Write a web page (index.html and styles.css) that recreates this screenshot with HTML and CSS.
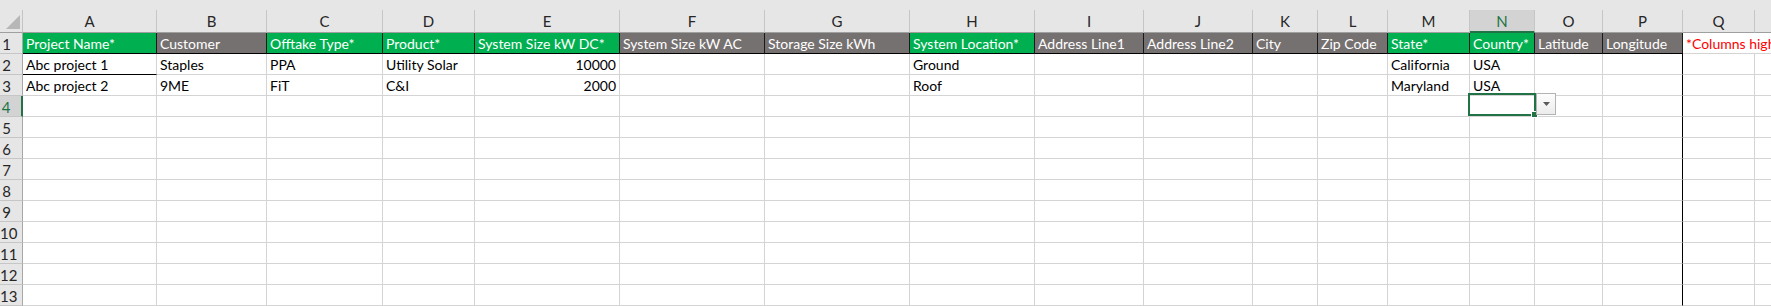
FILE: index.html
```html
<!DOCTYPE html>
<html lang="en">
<head>
<meta charset="utf-8">
<title>Projects sheet</title>
<link rel="stylesheet" href="styles.css">
</head>
<body>
<div class="topstrip"></div>
<div class="sheet">
  <div class="row colheads">
    <div class="corner"><svg class="tri" width="14" height="14" viewBox="0 0 14 14"><polygon points="14,0 14,14 0,14" fill="#b7b7b7"/></svg></div>
    <div class="ch">A</div><div class="ch">B</div><div class="ch">C</div><div class="ch">D</div><div class="ch">E</div><div class="ch">F</div><div class="ch">G</div><div class="ch">H</div><div class="ch">I</div><div class="ch">J</div><div class="ch">K</div><div class="ch">L</div><div class="ch">M</div><div class="ch ch-sel">N</div><div class="ch">O</div><div class="ch">P</div><div class="ch">Q</div><div class="ch"></div>
  </div>

  <div class="row">
    <div class="rh">1</div>
    <div class="c hd green">Project Name*</div>
    <div class="c hd grey">Customer</div>
    <div class="c hd green">Offtake Type*</div>
    <div class="c hd green">Product*</div>
    <div class="c hd green">System Size kW DC*</div>
    <div class="c hd grey">System Size kW AC</div>
    <div class="c hd grey">Storage Size kWh</div>
    <div class="c hd green">System Location*</div>
    <div class="c hd grey">Address Line1</div>
    <div class="c hd grey">Address Line2</div>
    <div class="c hd grey">City</div>
    <div class="c hd grey">Zip Code</div>
    <div class="c hd green">State*</div>
    <div class="c hd green">Country*</div>
    <div class="c hd grey">Latitude</div>
    <div class="c hd grey">Longitude</div>
    <div class="c note">*Columns highlighted in green are mandatory</div>
    <div class="c last"></div>
  </div>

  <div class="row">
    <div class="rh">2</div>
    <div class="c under">Abc project 1</div>
    <div class="c">Staples</div>
    <div class="c">PPA</div>
    <div class="c">Utility Solar</div>
    <div class="c num">10000</div>
    <div class="c"></div><div class="c"></div>
    <div class="c">Ground</div>
    <div class="c"></div><div class="c"></div><div class="c"></div><div class="c"></div>
    <div class="c">California</div>
    <div class="c">USA</div>
    <div class="c"></div>
    <div class="c edge"></div>
    <div class="c"></div>
    <div class="c"></div>
  </div>

  <div class="row">
    <div class="rh">3</div>
    <div class="c">Abc project 2</div>
    <div class="c">9ME</div>
    <div class="c">FiT</div>
    <div class="c">C&amp;I</div>
    <div class="c num">2000</div>
    <div class="c"></div><div class="c"></div>
    <div class="c">Roof</div>
    <div class="c"></div><div class="c"></div><div class="c"></div><div class="c"></div>
    <div class="c">Maryland</div>
    <div class="c">USA</div>
    <div class="c"></div>
    <div class="c edge"></div>
    <div class="c"></div>
    <div class="c"></div>
  </div>

  <div class="row">
    <div class="rh rh-sel">4</div>
    <div class="c"></div><div class="c"></div><div class="c"></div><div class="c"></div><div class="c"></div><div class="c"></div><div class="c"></div><div class="c"></div><div class="c"></div><div class="c"></div><div class="c"></div><div class="c"></div><div class="c"></div>
    <div class="c active">
      <span class="selbox"><span class="handle"></span></span>
      <span class="dropbtn"><svg width="7" height="4" viewBox="0 0 7 4"><polygon points="0,0 7,0 3.5,4" fill="#5a5a5a"/></svg></span>
    </div>
    <div class="c"></div>
    <div class="c edge"></div>
    <div class="c"></div>
    <div class="c"></div>
  </div>

  <div class="row">
    <div class="rh">5</div>
    <div class="c"></div><div class="c"></div><div class="c"></div><div class="c"></div><div class="c"></div><div class="c"></div><div class="c"></div><div class="c"></div><div class="c"></div><div class="c"></div><div class="c"></div><div class="c"></div><div class="c"></div><div class="c"></div><div class="c"></div>
    <div class="c edge"></div><div class="c"></div><div class="c"></div>
  </div>
  <div class="row">
    <div class="rh">6</div>
    <div class="c"></div><div class="c"></div><div class="c"></div><div class="c"></div><div class="c"></div><div class="c"></div><div class="c"></div><div class="c"></div><div class="c"></div><div class="c"></div><div class="c"></div><div class="c"></div><div class="c"></div><div class="c"></div><div class="c"></div>
    <div class="c edge"></div><div class="c"></div><div class="c"></div>
  </div>
  <div class="row">
    <div class="rh">7</div>
    <div class="c"></div><div class="c"></div><div class="c"></div><div class="c"></div><div class="c"></div><div class="c"></div><div class="c"></div><div class="c"></div><div class="c"></div><div class="c"></div><div class="c"></div><div class="c"></div><div class="c"></div><div class="c"></div><div class="c"></div>
    <div class="c edge"></div><div class="c"></div><div class="c"></div>
  </div>
  <div class="row">
    <div class="rh">8</div>
    <div class="c"></div><div class="c"></div><div class="c"></div><div class="c"></div><div class="c"></div><div class="c"></div><div class="c"></div><div class="c"></div><div class="c"></div><div class="c"></div><div class="c"></div><div class="c"></div><div class="c"></div><div class="c"></div><div class="c"></div>
    <div class="c edge"></div><div class="c"></div><div class="c"></div>
  </div>
  <div class="row">
    <div class="rh">9</div>
    <div class="c"></div><div class="c"></div><div class="c"></div><div class="c"></div><div class="c"></div><div class="c"></div><div class="c"></div><div class="c"></div><div class="c"></div><div class="c"></div><div class="c"></div><div class="c"></div><div class="c"></div><div class="c"></div><div class="c"></div>
    <div class="c edge"></div><div class="c"></div><div class="c"></div>
  </div>
  <div class="row">
    <div class="rh">10</div>
    <div class="c"></div><div class="c"></div><div class="c"></div><div class="c"></div><div class="c"></div><div class="c"></div><div class="c"></div><div class="c"></div><div class="c"></div><div class="c"></div><div class="c"></div><div class="c"></div><div class="c"></div><div class="c"></div><div class="c"></div>
    <div class="c edge"></div><div class="c"></div><div class="c"></div>
  </div>
  <div class="row">
    <div class="rh">11</div>
    <div class="c"></div><div class="c"></div><div class="c"></div><div class="c"></div><div class="c"></div><div class="c"></div><div class="c"></div><div class="c"></div><div class="c"></div><div class="c"></div><div class="c"></div><div class="c"></div><div class="c"></div><div class="c"></div><div class="c"></div>
    <div class="c edge"></div><div class="c"></div><div class="c"></div>
  </div>
  <div class="row">
    <div class="rh">12</div>
    <div class="c"></div><div class="c"></div><div class="c"></div><div class="c"></div><div class="c"></div><div class="c"></div><div class="c"></div><div class="c"></div><div class="c"></div><div class="c"></div><div class="c"></div><div class="c"></div><div class="c"></div><div class="c"></div><div class="c"></div>
    <div class="c edge"></div><div class="c"></div><div class="c"></div>
  </div>
  <div class="row">
    <div class="rh">13</div>
    <div class="c"></div><div class="c"></div><div class="c"></div><div class="c"></div><div class="c"></div><div class="c"></div><div class="c"></div><div class="c"></div><div class="c"></div><div class="c"></div><div class="c"></div><div class="c"></div><div class="c"></div><div class="c"></div><div class="c"></div>
    <div class="c edge"></div><div class="c"></div><div class="c"></div>
  </div>
</div>
</body>
</html>
```
FILE: styles.css
```css
html, body {
  margin: 0;
  padding: 0;
  background: #ffffff;
  overflow: hidden;
}

body {
  width: 1771px;
  height: 306px;
  font-family: Lato, "Open Sans", "Liberation Sans", sans-serif;
  font-size: 14px;
  color: #000;
}

.topstrip {
  height: 10px;
  background: #e6e6e6;
}

.sheet {
  display: flex;
  flex-direction: column;
  width: 1830px;
}

.row {
  display: grid;
  grid-template-columns: 23px 134px 110px 116px 92px 145px 145px 145px 125px 109px 109px 65px 70px 82px 65px 68px 80px 72px 72px;
  height: 21px;
}

.row > div {
  box-sizing: border-box;
}

/* column header row */
.colheads {
  height: 23px;
}

.corner {
  background: #e6e6e6;
  border-right: 1px solid #c4c4c4;
  border-bottom: 1px solid #9f9f9f;
  display: flex;
  align-items: flex-end;
  justify-content: flex-end;
  padding: 0 2px 3px 0;
}

.tri {
  display: block;
}

.ch {
  background: #e6e6e6;
  border-right: 1px solid #c6c6c6;
  border-bottom: 1px solid #9f9f9f;
  text-align: center;
  color: #262626;
  font-size: 15px;
  padding-top: 1px;
  line-height: 21px;
}

.ch-sel {
  background: #d3d3d3;
  color: #217346;
  border-bottom: 2px solid #217346;
  line-height: 20px;
}

/* row headers */
.rh {
  background: #e6e6e6;
  border-right: 1px solid #a8a8a8;
  border-bottom: 1px solid #c6c6c6;
  color: #262626;
  text-align: center;
  font-size: 15px;
  padding: 2px 9px 0 0;
  line-height: 18px;
  white-space: nowrap;
}

.rh-sel {
  background: #d3d3d3;
  color: #217346;
  border-right: 2px solid #217346;
}

/* cells */
.c {
  border-right: 1px solid #d4d4d4;
  border-bottom: 1px solid #d4d4d4;
  padding: 2px 3px 0;
  line-height: 18px;
  white-space: nowrap;
  overflow: hidden;
}

.num {
  text-align: right;
}

.hd {
  color: #ffffff;
  border-right-color: #1a1a1a;
  border-bottom-color: #000000;
}

.green {
  background: #00b050;
}

.grey {
  background: #767171;
}

.note {
  color: #ff0000;
  overflow: visible;
  border-right: none;
  position: relative;
  z-index: 1;
}

.under {
  border-bottom-color: #000000;
}

.edge {
  border-right-color: #000000;
}

.last {
  border-right: none;
}

/* active cell N4 */
.active {
  position: relative;
  overflow: visible;
}

.selbox {
  position: absolute;
  left: -2px;
  top: -3px;
  width: 68px;
  height: 23px;
  box-sizing: border-box;
  border: 2px solid #217346;
}

.handle {
  position: absolute;
  right: -4px;
  bottom: -4px;
  width: 5px;
  height: 5px;
  background: #217346;
  border: 1px solid #ffffff;
}

.dropbtn {
  position: absolute;
  left: 66px;
  top: -3px;
  width: 20px;
  height: 22px;
  box-sizing: border-box;
  border: 1px solid #b3b3b3;
  background: linear-gradient(#fdfdfd, #ececec);
  display: flex;
  align-items: center;
  justify-content: center;
  z-index: 2;
}

.dropbtn svg {
  display: block;
}
```
